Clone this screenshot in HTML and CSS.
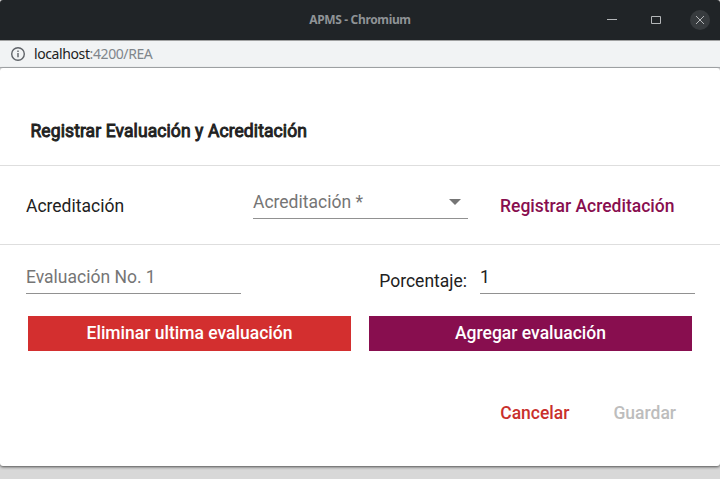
FILE: index.html
```html
<!DOCTYPE html>
<html lang="es">
<head>
<meta charset="utf-8">
<title>APMS</title>
<link rel="stylesheet" href="styles.css">
</head>
<body>
<header class="titlebar">
  <span class="window-title">APMS - Chromium</span>
  <div class="controls">
    <svg class="control" viewBox="0 0 20 20"><path d="M5 9.5h10"/></svg>
    <svg class="control" viewBox="0 0 20 20"><path d="M5.5 6.5h9v7h-9z"/></svg>
    <svg class="control close" viewBox="0 0 20 20"><path d="M6 6l8 8M14 6l-8 8"/></svg>
  </div>
</header>
<div class="address">
  <svg class="info" viewBox="0 0 14 14"><circle cx="7" cy="7" r="6.3"/><path d="M7 6v4.3M7 3.4v1.5"/></svg>
  <span class="host">localhost</span><span class="path">:4200/REA</span>
</div>
<main class="page">
  <form class="card">
    <h1 class="heading">Registrar Evaluación y Acreditación</h1>
    <section class="accreditation">
      <span class="label">Acreditación</span>
      <div class="field"><span>Acreditación *</span><svg class="arrow" viewBox="0 0 12 6"><path d="M0 0h12L6 6z"/></svg></div>
      <button type="button" class="link">Registrar Acreditación</button>
    </section>
    <section class="evaluation">
      <div class="field"><span>Evaluación No. 1</span></div>
      <span class="percent-label">Porcentaje:</span>
      <div class="field filled"><span>1</span></div>
    </section>
    <div class="buttons">
      <button type="button" class="block danger">Eliminar ultima evaluación</button>
      <button type="button" class="block primary">Agregar evaluación</button>
    </div>
    <footer class="actions">
      <button type="button" class="cancel">Cancelar</button>
      <button type="button" class="save" disabled>Guardar</button>
    </footer>
  </form>
</main>
</body>
</html>
```
FILE: styles.css
```css
* { box-sizing: border-box; }
body {
  margin: 0;
  height: 479px;
  overflow: hidden;
  background: #d8d8d8;
  color: #212121;
  font: 17.5px/24px Roboto, sans-serif;
}
button {
  padding: 0;
  border: 0;
  background: none;
  font: 500 17.5px/24px Roboto, sans-serif;
  white-space: nowrap;
}
.titlebar {
  display: grid;
  grid-template-columns: 1fr auto 1fr;
  align-items: center;
  height: 41px;
  border-bottom: 1px solid #a0a1a1;
  border-radius: 3px 3px 0 0;
  background: #202427;
}
.window-title {
  grid-column: 2;
  color: #8f9396;
  font: 700 12px/18px "Noto Sans", sans-serif;
  letter-spacing: -.35px;
}
.controls {
  display: flex;
  justify-content: flex-end;
  gap: 24px;
  padding-right: 10px;
}
.control {
  width: 20px;
  height: 20px;
  fill: none;
  stroke: #b4b7b9;
}
.close {
  border-radius: 50%;
  background: #373b3e;
}
.address {
  display: flex;
  align-items: center;
  height: 27px;
  padding-left: 11px;
  border-bottom: 1px solid #adb0b3;
  background: #f1f3f4;
  font: 14px/20px "Noto Sans", sans-serif;
  letter-spacing: -.4px;
}
.info {
  width: 14px;
  height: 14px;
  margin-right: 9px;
  fill: none;
  stroke: #5f6368;
  stroke-width: 1.4;
}
.path { color: #80868b; }
.card {
  height: 398px;
  border-radius: 3px;
  background: #fff;
  box-shadow: 0 1px 3px rgba(0, 0, 0, .65);
}
.heading {
  height: 98px;
  margin: 0;
  padding: 51px 30px 0 30.5px;
  border-bottom: 1px solid #dedede;
  font-size: 17.5px;
  font-weight: 400;
  letter-spacing: .09px;
  -webkit-text-stroke: .9px #212121;
}
.accreditation {
  display: grid;
  grid-template-columns: 227px 215px auto;
  justify-content: start;
  height: 79px;
  padding: 24px 26px 0;
  border-bottom: 1px solid #dedede;
}
.label { padding-top: 4px; }
.field {
  display: flex;
  justify-content: space-between;
  width: 215px;
  height: 29px;
  border-bottom: 1px solid #919191;
  color: #757575;
}
.filled { color: #212121; }
.arrow {
  width: 12px;
  height: 6px;
  margin: 9px 7px 0 0;
  fill: #757575;
}
.link {
  height: 24px;
  margin: 4px 0 0 32px;
  color: #880e4f;
}
.evaluation {
  display: flex;
  height: 49px;
  padding: 20px 25px 0 26px;
}
.percent-label { margin: 4px 13px 0 auto; }
.buttons {
  display: grid;
  grid-template-columns: 1fr 1fr;
  gap: 18px;
  padding: 22px 28px 0;
}
.block {
  height: 35px;
  padding-bottom: 2px;
  color: #fff;
}
.danger { background: #d32f2f; }
.primary { background: #880e4f; }
.actions {
  display: flex;
  justify-content: flex-end;
  gap: 44px;
  padding: 50px 44px 0 0;
}
.cancel { color: #c9302c; }
.save { color: #bdbdbd; }
```
